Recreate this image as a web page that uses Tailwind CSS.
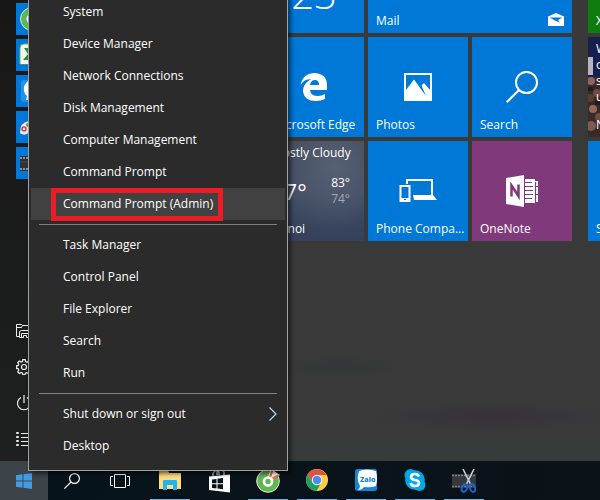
<!DOCTYPE html>
<html lang="en">
<head>
  <meta charset="UTF-8">
  <meta name="viewport" content="width=device-width, initial-scale=1.0">
  <title>Start menu</title>
  <script src="https://cdn.jsdelivr.net/npm/@tailwindcss/browser@4"></script>
</head>
<body class="relative flex h-screen flex-col overflow-hidden bg-[#3a3a3a] font-['Open_Sans','Noto_Sans',sans-serif] text-xs text-white">

  <!-- Start panel -->
  <main class="flex min-h-0 flex-1 overflow-hidden bg-[radial-gradient(ellipse_130px_16px_at_490px_417px,#35323a,transparent),radial-gradient(ellipse_70px_14px_at_340px_367px,#343637,transparent),linear-gradient(#393939,#3a3a3a_95%,#373b3c)]">

    <aside class="flex w-[264px] shrink-0 flex-col justify-between bg-linear-to-b from-[#171717] to-[#1e1f1f] pt-[3px] pb-1 pl-4">
      <nav class="flex flex-col gap-1" aria-label="Apps">
        <a href="#" aria-label="Coc Coc" class="size-8 bg-[#0078d7]">
          <svg viewBox="0 0 32 32"><circle cx="16" cy="16" r="11.5" fill="#5cb85c" stroke="#d5edd0"/><circle cx="16" cy="16" r="4" fill="none" stroke="#fff" stroke-width="3"/></svg>
        </a>
        <a href="#" aria-label="Spreadsheet" class="size-8 bg-[#0078d7]">
          <svg viewBox="0 0 32 32"><path d="M4 25V9q0-4 4-4h20v20z" fill="#eef7ea" stroke="#6cb85c"/><path d="M8 9h4l3 4 3-4h4l-5 6 5 6h-4l-3-4-3 4H7l5-6z" fill="#2d8a3a"/><path d="M5 22h23v3H5z" fill="#fff"/></svg>
        </a>
        <a href="#" aria-label="Zalo" class="size-8 bg-[#0078d7]">
          <svg viewBox="0 0 32 32"><rect x="5" y="5" width="22" height="22" rx="3" fill="#1f93e6"/><path d="M12 6q-5 4-4 10 1 4 3 5l-1 4q5 0 6-2h12V6z" fill="#fff"/></svg>
        </a>
        <a href="#" aria-label="Paint" class="size-8 bg-[#0078d7]">
          <svg viewBox="0 0 32 32"><path d="M4 22Q4 11 13 10q14-1 15 8-6 5-15 3-4 5-9 1z" fill="#e9eef2"/><circle cx="8" cy="18" r="2" fill="none" stroke="#e23b30" stroke-width="1.5"/><circle cx="12" cy="14" r="2" fill="#49a84c"/></svg>
        </a>
        <a href="#" aria-label="Video cutter" class="size-8 bg-[#0078d7]">
          <svg viewBox="0 0 32 32"><path d="M4 9h24v15H4z" fill="#303238"/><path d="M4 11h24M4 22h24" stroke="#8e9298" stroke-width="2" stroke-dasharray="2 1"/><path d="M4 15h24" stroke="#4b4e54"/></svg>
        </a>
      </nav>

      <nav class="flex flex-col" aria-label="System">
        <a href="#" aria-label="File Explorer" class="flex h-9 items-center">
          <svg class="size-4" viewBox="0 0 16 16" fill="none" stroke="#eee"><path d="M3.5 13.500h-3V1.500h5l1 1h9v3M.5 4.500h5l1-2"/><path d="M3.500 14.500v-6l2-1h10M5.500 14.500v-4h8v4M3.500 14.500h4v-2h3v2h5"/></svg>
        </a>
        <a href="#" aria-label="Settings" class="flex h-9 items-center">
          <svg class="size-4" viewBox="0 0 16 16" fill="none" stroke="#eee" stroke-width="1.200"><path d="M6.800.6h2.400l.4 2 1.400.6 1.700-1.100 1.700 1.700L13.300 5.500l.5 1.300 1.700.4v2.400l-2 .4-.5 1.300 1.100 1.700-1.700 1.700-1.700-1.100-1.300.5-.4 1.500H6.800l-.4-1.700-1.300-.5-1.700 1.100-1.700-1.700 1.100-1.700-.5-1.300-1.700-.4V6.800l1.700-.4.500-1.300L1.700 3.600l1.700-1.700L5.100 3l1.300-.5z"/><circle cx="8" cy="8" r="2.500"/></svg>
        </a>
        <a href="#" aria-label="Power" class="flex h-9 items-center">
          <svg class="size-4" viewBox="0 0 16 16" fill="none" stroke="#eee" stroke-width="1.200"><path d="M8 0v8M5 2.500a6.500 6.500 0 1 0 6 0"/></svg>
        </a>
        <a href="#" aria-label="All apps" class="flex h-9 items-center">
          <svg class="size-4" viewBox="0 0 16 16" fill="none" stroke="#eee"><path d="M.5 1.500h2v1h-2zM.5 5.500h2v1h-2zM.5 9.500h2v1h-2zM.5 13.500h2v1h-2zM5 2.500h11M5 6.500h11M5 10.500h11M5 14.500h11"/></svg>
        </a>
      </nav>
    </aside>

    <!-- Tile groups -->
    <section class="-mt-[67px] grid shrink-0 grid-cols-[100px_100px_100px] grid-rows-[100px_100px_100px] gap-1">
      <a href="#" class="flex flex-col items-center justify-end bg-[#0078d7] pb-4 text-[40px] leading-[46px] font-light">23</a>
      <a href="#" class="col-span-2 flex items-end justify-between bg-[#0078d7] px-2 pb-1">
        <span>Mail</span>
        <svg class="mb-[3px] h-[13px] w-4" viewBox="0 0 16 13"><path d="M0 3.500 8 0l8 3.500V13H0z" fill="#fff"/><path d="M1.500 4.500h13L10 7l2 2.500-4-1.500z" fill="#0078d7"/></svg>
      </a>

      <a href="#" class="flex flex-col justify-between bg-[#0078d7] px-2 pt-[35px] pb-1 whitespace-nowrap">
        <svg class="ml-7 h-[30px] w-7" viewBox="0 0 28 30" aria-hidden="true"><path d="M.5 13Q3 1 15 1q12 1 12 12v5H10q.5 6 8 6 4 0 7-2v5q-4 2-9 2Q4 29 3 19q0-7 8-12Q4 7 .5 13zM10 13h9q0-5-4-5-4 0-5 5z" fill="#fff"/></svg>
        <span>Microsoft Edge</span>
      </a>
      <a href="#" class="flex flex-col justify-between bg-[#0078d7] px-2 pt-9 pb-1">
        <svg class="h-7 self-center" viewBox="0 0 28 28" aria-hidden="true"><path d="M1 1h26v26H1z" fill="none" stroke="#fff" stroke-width="2"/><path d="M2 17 10 6.500 22 23 17.500 12.500 20 10l7 8v9H2z" fill="#fff"/></svg>
        <span>Photos</span>
      </a>
      <a href="#" class="flex flex-col justify-between bg-[#0078d7] px-2 pt-[34px] pb-1">
        <svg class="h-8 self-center" viewBox="0 0 32 32" fill="none" stroke="#fff" stroke-width="2" aria-hidden="true"><circle cx="20.500" cy="11.500" r="10.500"/><path d="M13 19 .7 31.300"/></svg>
        <span>Search</span>
      </a>

      <a href="#" class="flex flex-col justify-between bg-[radial-gradient(ellipse_at_70%_25%,#566174,transparent_60%),linear-gradient(#434857,#414d64_50%,#35415a)] px-2 pt-1 pb-1 whitespace-nowrap">
        <span>Mostly Cloudy</span>
        <div class="flex items-center justify-between pr-1.5">
          <span class="text-[22px] leading-8">77°</span>
          <span class="leading-4">83°<br><span class="text-[#a2a8b2]">74°</span></span>
        </div>
        <span>Hanoi</span>
      </a>
      <a href="#" class="flex flex-col justify-between bg-[#0078d7] px-2 pt-[37px] pb-1 whitespace-nowrap">
        <svg class="h-[26px] self-center" viewBox="0 0 38 26" aria-hidden="true"><path d="M8 6V2h25v15" fill="none" stroke="#fff" stroke-width="2"/><path d="M14 17h20l4 5H15z" fill="#fff"/><path d="M1.500 8h9v15h-9z" fill="none" stroke="#fff" stroke-width="2"/><path d="M1 20h10v4H1z" fill="#fff"/><path d="M5 21h2v1H5z" fill="#0078d7"/></svg>
        <span>Phone Compa...</span>
      </a>
      <a href="#" class="flex flex-col justify-between bg-[#80397b] px-2 pt-[34px] pb-1">
        <svg class="h-8 self-center" viewBox="0 0 32 32" aria-hidden="true"><path d="M0 3 18 0v32L0 29z" fill="#fff"/><path d="M5.500 21.500v-11l7 10.500V9.500" fill="none" stroke="#80397b" stroke-width="2.500"/><path d="M19 4h10v2h3v21h-3v1H19z" fill="#fff"/><path d="M19 7.500h7M19 11.500h8M19 15.500h8M19 19.500h8M19 23.500h7M29.500 7v20M29 11.500h3M29 19.500h3" stroke="#80397b" stroke-width="1.200"/></svg>
        <span>OneNote</span>
      </a>
    </section>

    <section class="-mt-[67px] ml-4 grid shrink-0 grid-cols-[100px] grid-rows-[100px_100px_100px] gap-1">
      <a href="#" class="flex items-end bg-[#107c10] px-2 pb-1">Xbox</a>
      <a href="#" class="relative flex flex-col justify-between overflow-hidden bg-[#392a29] px-2 pt-1 pb-1">
        <svg class="absolute inset-0 size-full" viewBox="0 0 100 100" aria-hidden="true"><path d="M0 0h100v40H0z" fill="#171f4e"/><path d="M0 20h5v18H0z" fill="#b9b5bd"/><circle cx="3" cy="44" r="4" fill="#8f6557"/><circle cx="9" cy="56" r="4" fill="#704b41"/><circle cx="2" cy="61" r="4" fill="#5f3b35"/><circle cx="5" cy="72" r="4" fill="#936a58"/><circle cx="11" cy="80" r="4" fill="#704b41"/><circle cx="3" cy="89" r="5" fill="#7d5a4b"/><path d="M0 50h5v4H0zM7 64h5v4H7z" fill="#1d1b26"/></svg>
        <span class="relative leading-4">World<br>on<br>stage<br>up</span>
        <span class="relative">News</span>
      </a>
      <a href="#" class="flex items-end bg-[#0078d7] px-2 pb-1">Store</a>
    </section>
  </main>

  <!-- Taskbar -->
  <footer class="flex h-[39px] shrink-0 bg-linear-to-r from-[#07131b] via-[#09141a] to-[#0b1218]">
    <button aria-label="Start" class="flex w-12 items-center justify-center bg-[#3c444a]">
      <svg class="size-4" viewBox="0 0 16 16" fill="#429ce3"><path d="M0 2.300 6.500 1.300v6.200H0zM7.500 1.200 16 0v7.500H7.500zM0 8.500h6.500v6.200L0 13.700zM7.500 8.500H16V16l-8.500-1.200z"/></svg>
    </button>
    <button aria-label="Search" class="flex w-12 items-center justify-center">
      <svg class="size-4" viewBox="0 0 16 16" fill="none" stroke="#fff" stroke-width="1.200"><circle cx="10.500" cy="5.500" r="4.900"/><path d="M7 9 .4 15.600"/></svg>
    </button>
    <button aria-label="Task View" class="flex w-12 items-center justify-center">
      <svg class="h-[14px] w-5" viewBox="0 0 20 14" fill="none" stroke="#fff"><path d="M4.500.5h11v13h-11zM3 2.500H.5v9H3M17 2.500h2.500v9H17"/></svg>
    </button>
    <div class="ml-0.5 flex gap-px">
      <button aria-label="File Explorer" class="flex w-12 flex-col items-center justify-between pt-2">
        <svg class="size-[22px]" viewBox="0 0 22 22"><path d="M0 2h9l2 3h11v15H0z" fill="#e8b93c"/><path d="M2 4h20v16H0V6z" fill="#fcdc84"/><path d="M1 2.500h8l1 1.500H1z" fill="#f8d15e"/><path d="M4 21v-9q0-1 1-1h12q1 0 1 1v9h-4v-5H8v5z" fill="#1fb4ed"/></svg>
        <span class="h-px w-10 bg-[#76b0e4]"></span>
      </button>
      <button aria-label="Store" class="flex w-12 items-start justify-center pt-2">
        <svg class="h-6 w-[22px]" viewBox="0 0 22 24"><path d="M5 7V4q3-4 6-1v3M9 6V3q4-4 7 0v3" fill="none" stroke="#d6d9db" stroke-width="1.200"/><path d="M1 7.500 22 5.500v18L1 21z" fill="#fff"/><path d="M4 10.500l4.500-.6v4.400H4zM9.500 9.700 15 9v5.300H9.500zM4 15.200h4.500v4.300L4 19zM9.500 15.200H15v5l-5.500-.6z" fill="#07131b"/></svg>
      </button>
      <button aria-label="Coc Coc" class="flex w-12 flex-col items-center justify-between pt-2">
        <svg class="size-6" viewBox="0 0 24 24"><circle cx="12" cy="12" r="11.300" fill="#62b456" stroke="#e6f2e3"/><path d="M11 10 15 0l9 6-9 6z" fill="#fff"/><path d="M14 8.500 16.500 1M16.500 9.500l6-3" stroke="#ed6b2f" stroke-width="2.200"/><circle cx="12" cy="12.500" r="4" fill="#62b456" stroke="#fff" stroke-width="2.600"/></svg>
        <span class="h-px w-10 bg-[#76b0e4]"></span>
      </button>
      <button aria-label="Chrome" class="flex w-12 flex-col items-center justify-between pt-2">
        <svg class="size-[22px]" viewBox="0 0 22 22"><circle cx="11" cy="11" r="11" fill="#ffcd46"/><path d="M1.500 5.500a11 11 0 0 1 19 .5H11L6.500 13.500z" fill="#de5145"/><path d="M1.500 5.500 6.500 13.700q3 3.500 8 1.300L10.500 22A11 11 0 0 1 1.500 5.500z" fill="#1aa15f"/><circle cx="11" cy="11" r="5.200" fill="#f3f3f3"/><circle cx="11" cy="11" r="4.200" fill="#4a8af4"/></svg>
        <span class="h-px w-10 bg-[#76b0e4]"></span>
      </button>
      <button aria-label="Zalo" class="flex w-12 flex-col items-center justify-between pt-2">
        <svg class="size-[22px]" viewBox="0 0 22 22"><rect width="22" height="22" rx="2.500" fill="#0f87dc"/><path d="M4 2Q11-1 21 2q2 8 0 15-5 2-12 1-2 3-6 3 2-2 2-4-4-6-1-15z" fill="#fff"/><text x="5" y="12.500" font-family="Open Sans, sans-serif" font-size="7" font-weight="800" fill="#0f87dc">Zalo</text></svg>
        <span class="h-px w-10 bg-[#76b0e4]"></span>
      </button>
      <button aria-label="Skype" class="flex w-12 flex-col items-center justify-between pt-2">
        <svg class="size-[22px]" viewBox="0 0 22 22"><circle cx="11" cy="11" r="9.800" fill="#00a8ea"/><circle cx="6.500" cy="6" r="6" fill="#00a8ea"/><circle cx="15.500" cy="16" r="6" fill="#00a8ea"/><path d="M15 7.500Q14 5 11 5 7 5 7 8q0 2.200 4 3 4 .7 4 3 0 3-4 3-3.500 0-4.500-3" fill="none" stroke="#fff" stroke-width="2.600"/></svg>
        <span class="h-px w-10 bg-[#76b0e4]"></span>
      </button>
      <button aria-label="Video cutter" class="flex w-12 flex-col items-center justify-between pt-2">
        <svg class="size-6" viewBox="0 0 24 24"><path d="M0 5h24v14H0z" fill="#35393d"/><path d="M0 6.500h24M0 17.500h24" stroke="#7c8083" stroke-width="1.500" stroke-dasharray="2 1"/><path d="M11 0l8 16M22 0l-8 16" stroke="#c9ced3" stroke-width="1.600"/><ellipse cx="12.500" cy="19" rx="2.500" ry="4" transform="rotate(25 12.500 19)" fill="none" stroke="#1c62d1" stroke-width="2"/><ellipse cx="20.500" cy="19" rx="2.500" ry="4" transform="rotate(-25 20.500 19)" fill="none" stroke="#1c62d1" stroke-width="2"/></svg>
        <span class="h-px w-10 bg-[#76b0e4]"></span>
      </button>
    </div>
  </footer>

  <!-- Context menu of the Start button -->
  <div role="menu" class="absolute bottom-[29px] left-7 flex w-[260px] flex-col border border-[#a0a0a0] bg-[#2b2b2b] px-0.5 pb-2 shadow-[3px_3px_4px_rgba(0,0,0,0.5)]">
    <button role="menuitem" class="h-8 px-8 text-left">System</button>
    <button role="menuitem" class="h-8 px-8 text-left">Device Manager</button>
    <button role="menuitem" class="h-8 px-8 text-left">Network Connections</button>
    <button role="menuitem" class="h-8 px-8 text-left">Disk Management</button>
    <button role="menuitem" class="h-8 px-8 text-left">Computer Management</button>
    <button role="menuitem" class="h-8 px-8 text-left">Command Prompt</button>
    <button role="menuitem" class="relative h-8 bg-[#414141] px-8 text-left">Command Prompt (Admin)
      <span class="absolute top-0 left-5 h-[33px] w-[172px] border-[5px] border-[#ed1c24]"></span>
    </button>
    <hr class="mx-2 my-1 border-[#808080]">
    <button role="menuitem" class="h-8 px-8 text-left">Task Manager</button>
    <button role="menuitem" class="h-8 px-8 text-left">Control Panel</button>
    <button role="menuitem" class="h-8 px-8 text-left">File Explorer</button>
    <button role="menuitem" class="h-8 px-8 text-left">Search</button>
    <button role="menuitem" class="h-8 px-8 text-left">Run</button>
    <hr class="mx-2 my-1 border-[#808080]">
    <button role="menuitem" class="flex h-8 items-center justify-between pr-2 pl-8 text-left">Shut down or sign out
      <svg class="h-[14px] w-2" viewBox="0 0 8 14" fill="none" stroke="#b5dcf5" stroke-width="1.200"><path d="M.5.500 7 7 .5 13.500"/></svg>
    </button>
    <button role="menuitem" class="h-8 px-8 text-left">Desktop</button>
  </div>

</body>
</html>
